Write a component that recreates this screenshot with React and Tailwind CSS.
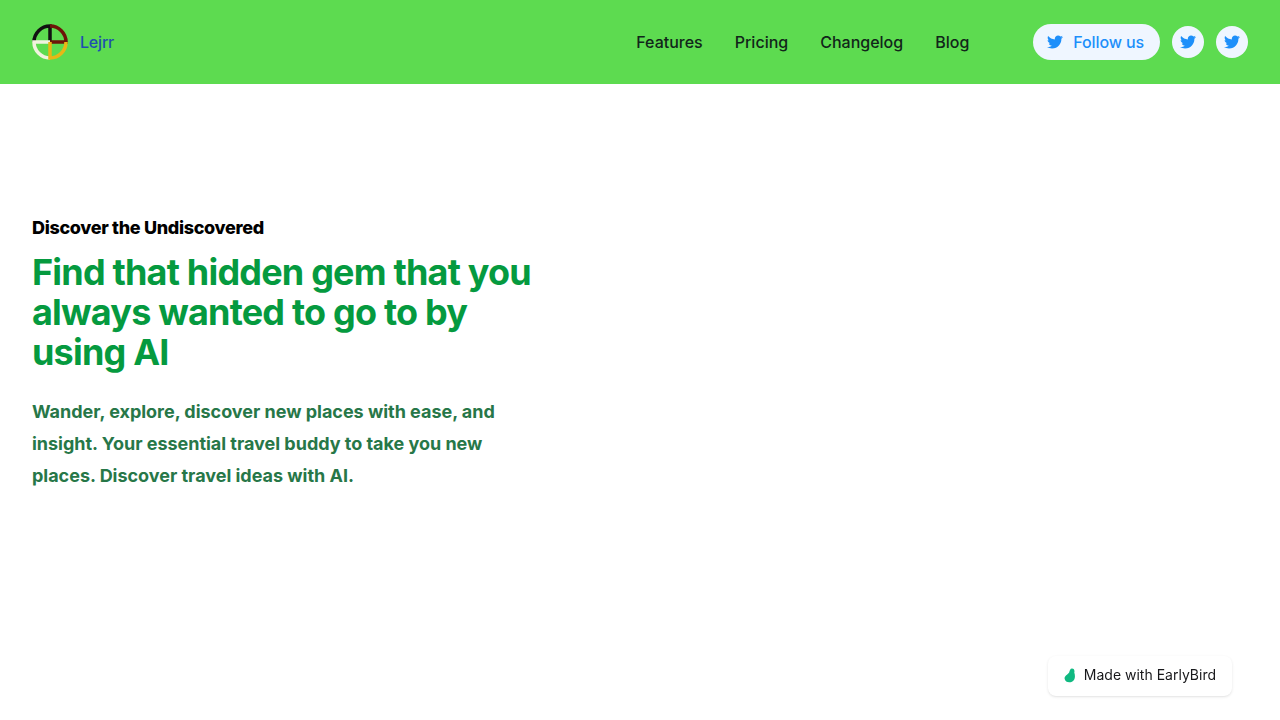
import { FaTwitter } from "react-icons/fa";

function Logo() {
    return (
        <svg width="36" height="36" viewBox="0 0 36 36" fill="none" strokeWidth="3.5">
            <path d="M18 18 V2 A16 16 0 0 0 2 18" stroke="#111" />
            <path d="M18 2 A16 16 0 0 1 34 18 H18" stroke="#6e1408" />
            <path d="M18 18 H2 A16 16 0 0 0 18 34" stroke="#f1f3df" />
            <path d="M18 18 V34 A16 16 0 0 0 34 18" stroke="#e8b716" />
        </svg>
    );
}

function IconButton() {
    return (
        <a className="flex items-center justify-center w-8 h-8 rounded-full bg-blue-50 text-[#1d8ffa]">
            <FaTwitter size={16} />
        </a>
    );
}

export default function App() {
    return (
        <div className="min-h-[720px] bg-white font-['Inter',sans-serif]">
            <header className="h-[84px] bg-[#5ddb50] px-8 flex items-center justify-between">
                <div className="flex items-center gap-3">
                    <Logo />
                    <span className="text-base font-medium tracking-[-0.2px] text-[#1e4fb0]">Lejrr</span>
                </div>
                <div className="flex items-center">
                    <nav className="flex items-center gap-8 mr-16 text-base font-medium text-[#11261a]">
                        <a>Features</a>
                        <a>Pricing</a>
                        <a>Changelog</a>
                        <a>Blog</a>
                    </nav>
                    <div className="flex items-center gap-3">
                        <a className="flex items-center gap-2.5 h-9 pl-3.5 pr-4 rounded-full bg-blue-50 text-[#1d8ffa] text-base font-medium tracking-[-0.12px]">
                            <FaTwitter size={16} />
                            Follow us
                        </a>
                        <IconButton />
                        <IconButton />
                    </div>
                </div>
            </header>
            <main className="px-8 pt-[130px] w-[576px]">
                <p className="text-lg font-extrabold text-black tracking-[-0.33px]">Discover the Undiscovered</p>
                <h1 className="mt-2.5 text-4xl leading-10 font-bold text-[#059a3f] tracking-[-0.8px]">
                    Find that hidden gem that you always wanted to go to by using AI
                </h1>
                <p className="mt-6 text-lg leading-8 font-bold text-[#277748] tracking-[-0.02px]">
                    Wander, explore, discover new places with ease, and insight. Your essential travel buddy to take you new places. Discover travel ideas with AI.
                </p>
            </main>
            <a className="fixed right-12 bottom-6 flex items-center gap-2 h-10 px-4 pb-0.5 rounded-lg bg-white shadow text-sm text-[#18181b]">
                <svg width="12" height="15" viewBox="1 0.5 10.5 13.2">
                    <path d="M8 1 C10 1 10.5 3 10 4.5 C11 7 11 11 8 12.5 C5.5 13.8 2 13 1.5 10 C1.2 7.5 4 6.5 5.5 4.5 C6 2.5 6.5 1 8 1 Z" fill="#10b981" />
                </svg>
                Made with EarlyBird
            </a>
        </div>
    );
}
